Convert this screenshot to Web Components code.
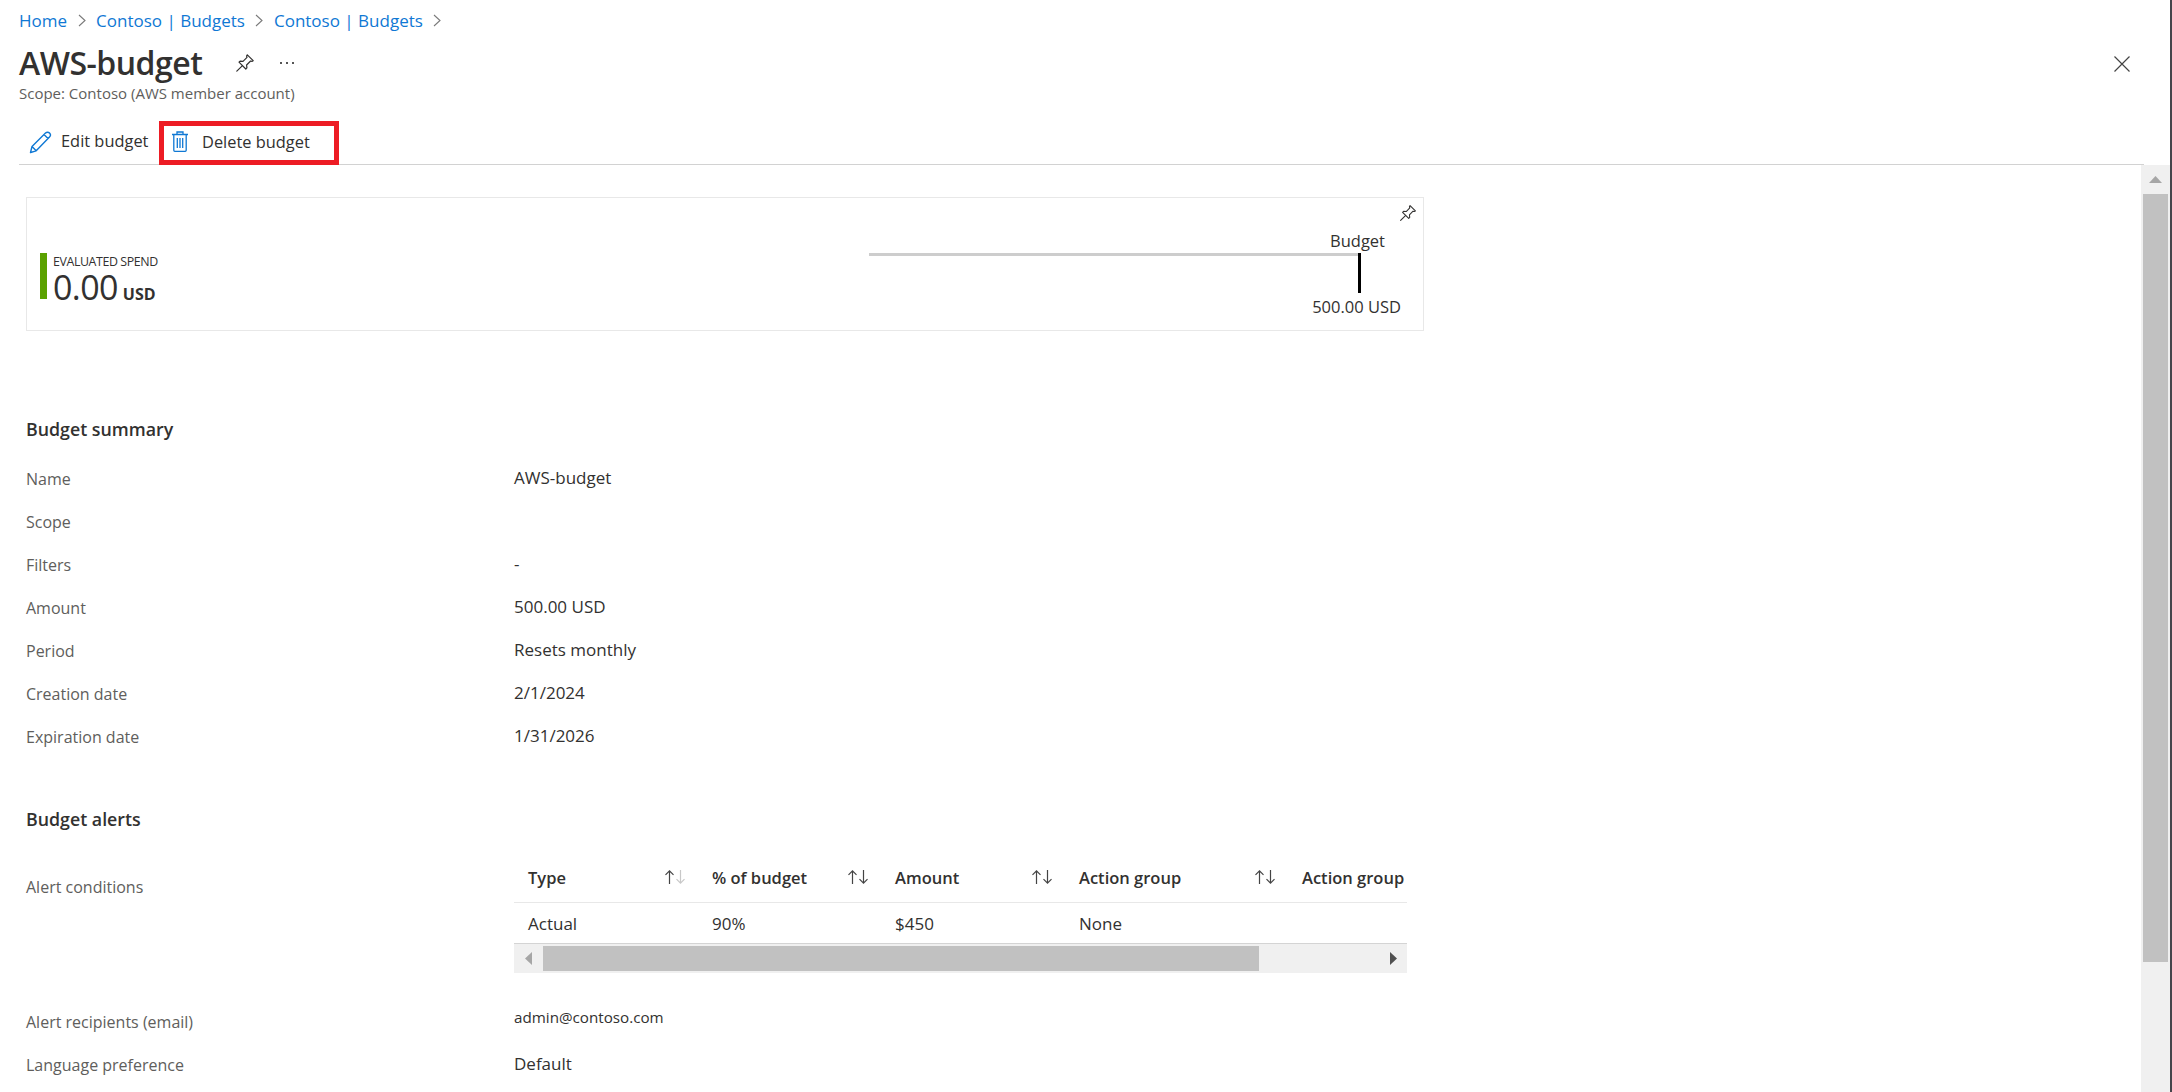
<!DOCTYPE html>
<html lang="en"><head><meta charset="utf-8"><title>AWS-budget</title>
<style>
html,body{margin:0;height:100%;background:#fff;overflow:hidden}
body{font:16px "Open Sans","Liberation Sans",sans-serif;color:#323130}
</style></head><body>
<budget-page>
  <az-breadcrumb slot="crumbs"><a>Home</a><a>Contoso | Budgets</a><a>Contoso | Budgets</a></az-breadcrumb>
  <az-title slot="title" heading="AWS-budget" scope="Scope: Contoso (AWS member account)"></az-title>
  <az-toolbar slot="toolbar"></az-toolbar>
  <spend-card></spend-card>
  <section-head style="margin-top:87px">Budget summary</section-head>
  <summary-row label="Name">AWS-budget</summary-row>
  <summary-row label="Scope"></summary-row>
  <summary-row label="Filters">-</summary-row>
  <summary-row label="Amount">500.00 USD</summary-row>
  <summary-row label="Period">Resets monthly</summary-row>
  <summary-row label="Creation date">2/1/2024</summary-row>
  <summary-row label="Expiration date">1/31/2026</summary-row>
  <section-head style="margin-top:42px">Budget alerts</section-head>
  <alert-conditions></alert-conditions>
  <summary-row label="Alert recipients (email)" small>admin@contoso.com</summary-row>
  <summary-row label="Language preference">Default</summary-row>
</budget-page>
<script>
const def=(name,html,init)=>customElements.define(name,class extends HTMLElement{
  connectedCallback(){ if(this.shadowRoot)return; const s=this.attachShadow({mode:'open'}); s.innerHTML=typeof html==='function'?html(this):html; init&&init(this,s);} });
const pin=(sz,c='#323130')=>`<svg width="${sz}" height="${sz}" viewBox="0 0 20 20" fill="none" stroke="${c}" stroke-width="1.2" stroke-linejoin="round" stroke-linecap="round"><path d="M12.3 1.8 18.2 7.700 16.9 8.400 15.600 8 11.600 12 11.900 14.900 10.800 16 4 9.200 5.100 8.100 8 8.400 12 4.400 11.600 3.100Z"/><path d="M7.200 12.800 1.800 18.200"/></svg>`;

def('budget-page',`<style>
:host{display:flex;flex-direction:column;height:1092px;width:2172px;box-sizing:border-box;border-right:2px solid #45454b;overflow:hidden}
.top{padding:0 26px 0 19px;flex:none}
.main{flex:1;display:flex;min-height:0;margin-left:19px}
.content{flex:1;padding:32px 0 0 7px;overflow:hidden;min-width:0}
.vbar{flex:none;width:29px;background:#f0f0f0;display:flex;flex-direction:column;align-items:center}
.up{height:29px;display:flex;align-items:center;justify-content:center;flex:none}
.thumb{width:25px;height:768px;background:#c1c1c1;flex:none}
</style>
<div class="top"><slot name="crumbs"></slot><slot name="title"></slot><slot name="toolbar"></slot></div>
<div class="main"><div class="content"><slot></slot></div>
<div class="vbar"><div class="up"><svg width="13" height="7" viewBox="0 0 13 7"><path d="M6.500 0 13 7H0Z" fill="#a6a6a6"/></svg></div><div class="thumb"></div></div></div>`);

def('az-breadcrumb',`<style>
:host{display:block;height:40px;font-size:17px}
.w{display:flex;align-items:center;height:40px;color:#0f78d4}
svg{margin:0 10.500px;flex:none}
::slotted(a){color:#0f78d4}
</style><div class="w"></div>`,(el,s)=>{
  const w=s.querySelector('.w');
  const chev=()=>{const t=document.createElement('template');t.innerHTML='<svg width="8" height="13" viewBox="0 0 8 13" fill="none" stroke="#7a7a7a" stroke-width="1.1"><path d="M1 1l6 5.500L1 12"/></svg>';return t.content.firstChild};
  [...el.children].forEach((a,i)=>{a.slot='c'+i;const sl=document.createElement('slot');sl.name='c'+i;w.append(sl,chev())});
});

def('az-title',e=>`<style>
:host{display:block;height:68px;box-sizing:border-box;padding-top:6px}
.r{display:flex;align-items:center;height:34px}
h1{margin:0;font-size:32px;line-height:34px;font-weight:600;color:#323130;letter-spacing:-.5px}
.pin{margin-left:33px;display:flex}
.dots{margin-left:25px;display:flex;gap:4px}
.dots i{width:2px;height:2px;background:#555;display:block}
.x{margin-left:auto;margin-right:14px;display:flex;margin-top:2px}
p{margin:4px 0 0;font-size:15px;line-height:19px;color:#605e5c}
</style><div class="r"><h1>${e.getAttribute('heading')}</h1><span class="pin">${pin(20)}</span><span class="dots"><i></i><i></i><i></i></span>
<span class="x"><svg width="16" height="16" viewBox="0 0 16 16" stroke="#444" stroke-width="1.2"><path d="M.5.500l15 15M15.500.500l-15 15"/></svg></span></div><p>${e.getAttribute('scope')}</p>`);

def('az-toolbar',`<style>
:host{display:flex;align-items:flex-start;height:45px;margin-top:12px;border-bottom:1px solid #d2d2d2;font-size:16.400px;color:#323130;box-sizing:border-box}
.b{display:flex;align-items:center}
.b span{margin-bottom:3px}
.edit{padding-left:10px;width:140px;height:44px;box-sizing:border-box;gap:9px}
.del{box-sizing:border-box;width:180px;height:44px;border:5px solid #ed1c24;padding-left:8px;gap:14px;margin-top:1px;flex:none}
</style>
<div class="b edit"><svg width="23" height="23" viewBox="0 0 23 23" fill="none" stroke="#0f78d4" stroke-width="1.4" stroke-linejoin="round"><path d="M1.500 21.500 3 15.500 16.500 2c1.200-1.100 3-1.100 4 0s1.200 2.900 0 4L7.200 19.800ZM3 15.500 7.200 19.800M15 3.500 19 7.500"/></svg><span>Edit budget</span></div>
<div class="b del"><svg width="16" height="21" viewBox="0 0 16 21" fill="none" stroke="#0f78d4" stroke-width="1.3" style="margin-bottom:3px"><path d="M0 3.500H16M5 3.500V1H11V3.500M1.800 3.500V19.300Q1.800 20.300 2.800 20.300H13.200Q14.200 20.300 14.200 19.300V3.500M5.300 7V17M8 7V17M10.700 7V17"/></svg><span>Delete budget</span></div>`);

def('spend-card',`<style>
:host{display:block;width:1398px;height:134px;box-sizing:border-box;border:1px solid #e8e8e8;position:relative}
.wrap{display:flex;height:100%;box-sizing:border-box;padding:55px 0 0 13px}
.bar{width:7px;height:46px;background:#5aa100;flex:none}
.t{margin-left:6px}
.l{font-size:12.400px;line-height:14px;letter-spacing:-.4px;color:#323130;margin-top:2px}
.v{display:flex;align-items:baseline;font-size:34px;line-height:40px;color:#323130;letter-spacing:-.6px;margin-top:-2px}
.v b{font-size:16px;font-weight:700;margin-left:5px;letter-spacing:0}
.chart{position:absolute;left:842px;top:0;width:540px;height:100%}
.track{position:absolute;left:0;top:55px;width:489px;height:3px;background:#cdcdcd}
.tick{position:absolute;left:489px;top:55px;width:3px;height:40px;background:#000}
.b1,.b2{position:absolute;font-size:16.500px;line-height:20px;color:#323130;white-space:nowrap}
.b1{right:24px;top:33px}
.b2{right:8px;top:99px}
.pin{position:absolute;right:6px;top:6px;display:flex}
</style><div class="wrap"><div class="bar"></div><div class="t"><div class="l">EVALUATED SPEND</div><div class="v">0.00<b>USD</b></div></div></div>
<div class="chart"><div class="track"></div><div class="tick"></div><div class="b1">Budget</div><div class="b2">500.00 USD</div></div><span class="pin">${pin(18)}</span>`);

def('section-head',`<style>:host{display:block;font-size:17.800px;line-height:22px;font-weight:600;color:#323130;margin-bottom:25px}</style><slot></slot>`);

def('summary-row',e=>`<style>
:host{display:flex;height:43px;align-items:flex-start;font-size:16px;line-height:22px}
.k{width:488px;flex:none;color:#605e5c;padding-top:3px}
.v{color:#323130;font-size:17px;${e.hasAttribute('small')?'font-size:15.200px;margin-top:-2px':'padding-top:2px'}}
</style><div class="k">${e.getAttribute('label')}</div><div class="v"><slot></slot></div>`);

const arrows=(fade)=>`<svg width="24" height="16" viewBox="0 0 24 16" fill="none" stroke-width="1.200"><path stroke="#444" d="M6.500 15V2M2.500 5.800 6.500 1.800 10.500 5.800"/><path stroke="${fade?'#c8c8c8':'#444'}" d="M17.500 1V14M13.500 10.200 17.500 14.200 21.500 10.200"/></svg>`;
def('alert-conditions',`<style>
:host{display:flex;height:153px;font-size:16px}
.k{width:488px;flex:none;color:#605e5c;padding-top:21px;line-height:22px}
.t{width:893px;flex:none;overflow:hidden}
.g{display:grid;grid-template-columns:184px 183px 184px 223px 119px;width:893px;overflow:hidden}
.h,.c{display:flex;align-items:center;justify-content:space-between;padding-left:14px;box-sizing:border-box;white-space:nowrap;overflow:hidden}
.h{height:48px;padding-bottom:3px;font-size:16.500px;font-weight:600;color:#323130;border-bottom:1px solid #e8e8e8}
.h svg{margin-right:11px;flex:none}
.c{height:41px;font-size:17px;color:#323130;border-bottom:1px solid #d4d4d4}
.hb{height:29px;background:#f0f0f0;display:flex;align-items:center;position:relative}
.th{position:absolute;left:29px;width:716px;top:2px;height:25px;background:#c1c1c1}
.l{margin-left:11px}.r{position:absolute;right:10px}
</style><div class="k">Alert conditions</div><div class="t"><div class="g">
<div class="h">Type${arrows(true)}</div><div class="h">% of budget${arrows()}</div><div class="h">Amount${arrows()}</div><div class="h">Action group${arrows()}</div><div class="h">Action group</div>
<div class="c">Actual</div><div class="c">90%</div><div class="c">$450</div><div class="c">None</div><div class="c"></div></div>
<div class="hb"><svg class="l" width="7" height="13" viewBox="0 0 7 13"><path d="M7 0V13L0 6.500Z" fill="#a6a6a6"/></svg><div class="th"></div><svg class="r" width="7" height="13" viewBox="0 0 7 13"><path d="M0 0V13L7 6.500Z" fill="#505050"/></svg></div></div>`);
</script>
</body></html>
